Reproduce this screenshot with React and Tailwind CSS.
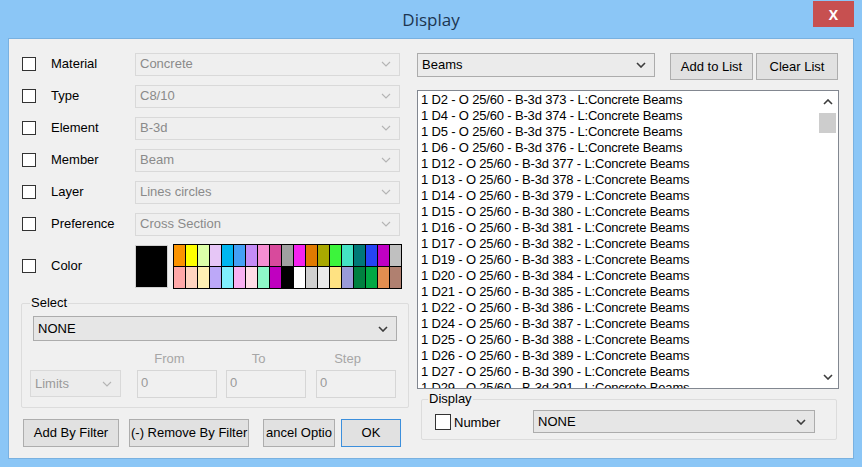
import React from 'react'

const font = { fontFamily: '"Liberation Sans", Arial, sans-serif' }

const Chevron = ({ dark, up }) => (
  <svg width="10" height="6" viewBox="0 0 10 6" className="shrink-0">
    <polyline
      points={up ? '1,5 5,1 9,5' : '1,1 5,5 9,1'}
      fill="none"
      stroke={dark ? '#3c3c3c' : '#b4b4b4'}
      strokeWidth={dark ? 1.6 : 1.1}
    />
  </svg>
)

const Check = ({ big }) => (
  <div className={big ? 'w-[16px] h-[16px] border border-[#333] bg-white shrink-0' : 'w-[14px] h-[14px] border border-[#333] bg-white shrink-0'} />
)

const Combo = ({ text, disabled, className }) => (
  <div
    className={
      'flex items-center justify-between pl-[4px] pr-[8px] border ' +
      (disabled ? 'border-[#d9d9d9] bg-[#efefef] text-[#8a8a8a]' : 'border-[#acacac] bg-[#e6e6e6] text-black') +
      ' ' + className
    }
  >
    <span>{text}</span>
    <Chevron dark={!disabled} />
  </div>
)

const Btn = ({ children, className }) => (
  <div className={'flex items-center justify-center border border-[#adadad] bg-[#e1e1e1] text-black whitespace-nowrap overflow-hidden ' + className}>
    {children}
  </div>
)

const fields = [
  ['Material', 'Concrete'],
  ['Type', 'C8/10'],
  ['Element', 'B-3d'],
  ['Member', 'Beam'],
  ['Layer', 'Lines circles'],
  ['Preference', 'Cross Section'],
]

const topColors = ['#fb9300', '#ffff00', '#ddffa8', '#e6c6f6', '#00b6f0', '#44a0f6', '#c48cf6', '#f68ed2', '#d84a9c', '#a0a0a0', '#f424ee', '#e07a00', '#a8a800', '#3cf43c', '#44e2c4', '#007878', '#2444f4', '#c000c4', '#c0c0c0']
const bottomColors = ['#ffa8a8', '#ffd4c0', '#fff0b4', '#bca8f8', '#80eefe', '#f8b0f2', '#ffdce6', '#8ef8c8', '#c000c0', '#000000', '#ffffff', '#d0d0d0', '#eaeaea', '#ffe282', '#9a9ad8', '#008040', '#00a844', '#e28e50', '#b08070']

const items = [
  ['D2', 373], ['D4', 374], ['D5', 375], ['D6', 376], ['D12', 377], ['D13', 378], ['D14', 379],
  ['D15', 380], ['D16', 381], ['D17', 382], ['D19', 383], ['D20', 384], ['D21', 385], ['D22', 386],
  ['D24', 387], ['D25', 388], ['D26', 389], ['D27', 390], ['D29', 391],
]

const App = () => {
  return (
    <div className="w-[862px] h-[467px] bg-[#8bc6f6] flex flex-col text-[13px]" style={font}>
      {/* title bar */}
      <div className="h-[38px] flex items-start relative shrink-0">
        <div className="flex-1 text-center pt-[7px] text-[17px] text-[#1c3550]" style={{ fontFamily: '"Open Sans", sans-serif' }}>
          Display
        </div>
        <div className="absolute right-[8px] top-[1px] w-[41px] h-[26px] bg-[#c75050] flex items-center justify-center text-white text-[14px] font-bold" style={{ fontFamily: '"Open Sans", sans-serif' }}>
          X
        </div>
      </div>

      {/* body */}
      <div className="flex-1 mx-[8px] mb-[8px] bg-[#f0f0f0] border border-[#79b1e0] flex">
        {/* left column */}
        <div className="w-[401px] flex flex-col pt-[9px]">
          {fields.map(([label, value]) => (
            <div key={label} className="h-[32px] flex items-center">
              <div className="ml-[13px] w-[29px]"><Check /></div>
              <div className="w-[84px] text-black">{label}</div>
              <Combo text={value} disabled className="w-[265px] h-[23px]" />
            </div>
          ))}
          <div className="h-[52px] flex items-center">
            <div className="ml-[13px] w-[29px]"><Check /></div>
            <div className="w-[84px] text-black">Color</div>
            <div className="w-[33px] h-[43px] bg-black border border-[#d0d0d0]" />
            <div className="ml-[5px] grid grid-cols-[repeat(19,11px)] border border-black bg-black gap-px">
              {topColors.map((c, i) => (
                <div key={'t' + i} className="h-[21px]" style={{ background: c }} />
              ))}
              {bottomColors.map((c, i) => (
                <div key={'b' + i} className="h-[21px]" style={{ background: c }} />
              ))}
            </div>
          </div>

          {/* select group */}
          <fieldset className="mt-[4px] ml-[12px] w-[381px] h-[112px] border border-[#dcdcdc] rounded-[2px] px-[11px]">
            <legend className="ml-[-3px] px-[1px] text-black leading-[14px]">Select</legend>
            <Combo text="NONE" className="mt-[6px] w-[364px] h-[25px]" />
            <div className="flex mt-[8px] text-[#a6a6a6]">
              <div className="w-[92px]" />
              <div className="w-[89px] text-center">From</div>
              <div className="w-[89px] text-center">To</div>
              <div className="w-[89px] text-center">Step</div>
            </div>
            <div className="flex items-center mt-[1px] ml-[-3px]">
              <Combo text="Limits" disabled className="w-[91px] h-[27px] !bg-[#ececec] !text-[#9a9a9a]" />
              <div className="ml-[16px] w-[80px] h-[28px] border border-[#d6d6d6] pl-[3px] pt-[2px] text-[#9a9a9a]">0</div>
              <div className="ml-[9px] w-[80px] h-[28px] border border-[#d6d6d6] pl-[3px] pt-[2px] text-[#9a9a9a]">0</div>
              <div className="ml-[10px] w-[80px] h-[28px] border border-[#d6d6d6] pl-[3px] pt-[2px] text-[#9a9a9a]">0</div>
            </div>
          </fieldset>

          {/* bottom buttons */}
          <div className="flex mt-[11px] ml-[14px] text-[13px]">
            <Btn className="w-[96px] h-[28px]">Add By Filter</Btn>
            <Btn className="ml-[10px] w-[120px] h-[28px] justify-start pl-[1px]">(-) Remove By Filter</Btn>
            <Btn className="ml-[14px] w-[72px] h-[28px]">ancel Optio</Btn>
            <Btn className="ml-[6px] w-[60px] h-[28px] !border-[#3c8fdc]">OK</Btn>
          </div>
        </div>

        {/* right column */}
        <div className="flex-1 flex flex-col pl-[7px] pt-[14px]">
          <div className="flex items-start">
            <Combo text="Beams" className="w-[238px] h-[24px] !bg-[#ebebeb]" />
            <Btn className="ml-[15px] w-[83px] h-[27px]">Add to List</Btn>
            <Btn className="ml-[3px] w-[82px] h-[27px]">Clear List</Btn>
          </div>
          <div className="mt-[10px] w-[422px] h-[299px] bg-white border border-[#828790] flex overflow-hidden">
            <div className="flex-1 h-[297px] pl-[3px] pt-[1px] leading-[16px] text-black overflow-hidden tracking-[-0.17px]">
              {items.map(([d, n]) => (
                <div key={d} className="whitespace-nowrap">{`1 ${d} - O 25/60 - B-3d ${n} - L:Concrete Beams`}</div>
              ))}
            </div>
            <div className="w-[21px] flex flex-col items-center bg-white">
              <div className="h-[22px] flex items-center justify-center"><Chevron dark up /></div>
              <div className="w-[17px] h-[20px] bg-[#cdcdcd]" />
              <div className="flex-1" />
              <div className="h-[22px] flex items-center justify-center"><Chevron dark /></div>
            </div>
          </div>
          <fieldset className="mt-[3px] ml-[4px] w-[416px] h-[48px] border border-[#dcdcdc] rounded-[2px] px-[13px]">
            <legend className="ml-[-7px] px-[1px] text-black leading-[14px]">Display</legend>
            <div className="flex items-center mt-[4px]">
              <Check big />
              <div className="ml-[3px] w-[79px] pt-[2px]">Number</div>
              <Combo text="NONE" className="w-[282px] h-[23px] !bg-[#e6e6e6]" />
            </div>
          </fieldset>
        </div>
      </div>
    </div>
  )
}

export default App
